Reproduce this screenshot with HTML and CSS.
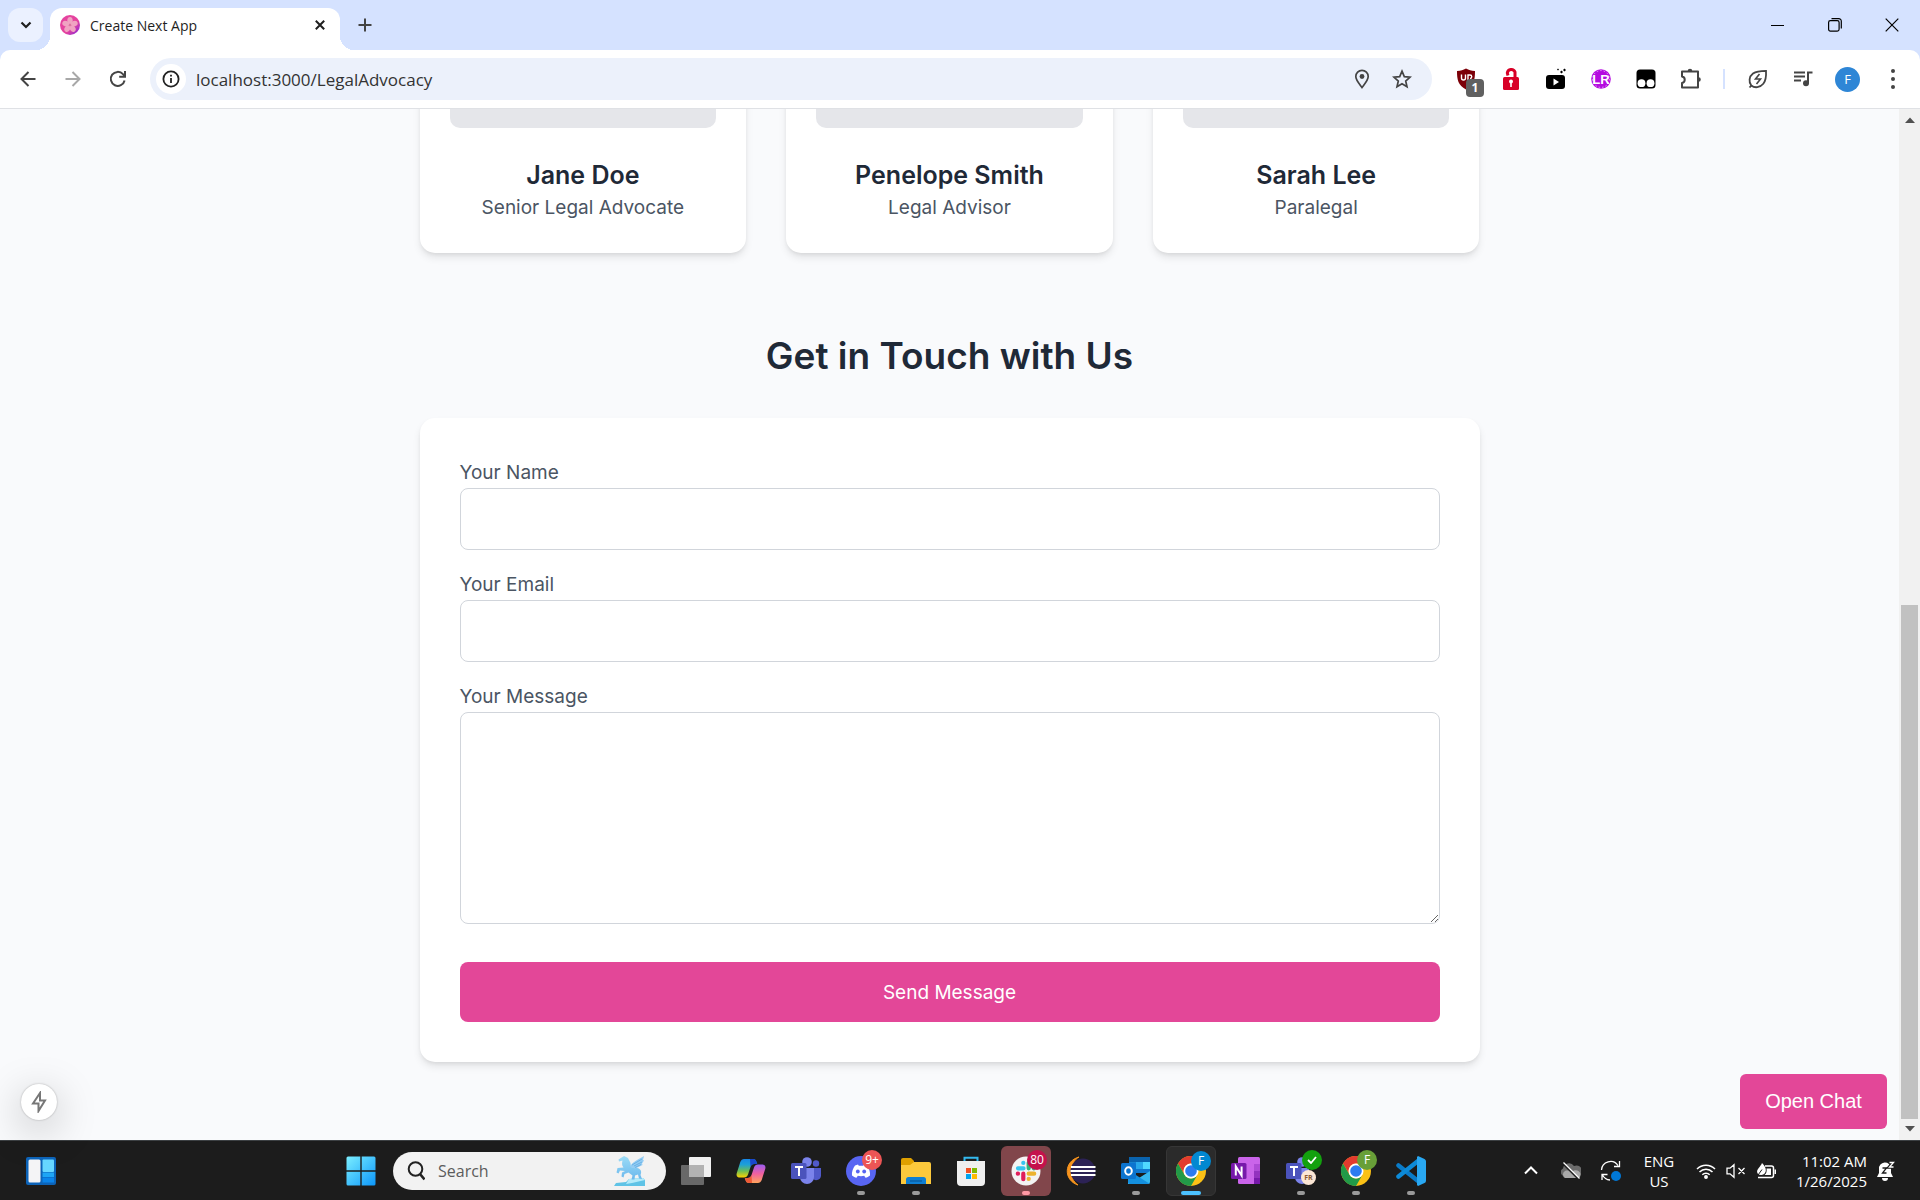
FILE: index.html
```html
<!DOCTYPE html>
<html lang="en">
<head>
    <meta charset="UTF-8">
    <meta name="viewport" content="width=device-width, initial-scale=1.0">
    <title>Create Next App</title>
    <link rel="stylesheet" href="styles.css">
</head>
<body>
    <!-- Tab strip -->
    <header class="tab-strip">
        <button class="tab-search" aria-label="Search tabs">
            <svg width="12" height="8" viewBox="0 0 12 8"><path d="M1.5 1.5 6 6l4.5-4.5" fill="none" stroke="#1f1f1f" stroke-width="2.2"/></svg>
        </button>
        <div class="tab">
            <svg width="20" height="20" viewBox="0 0 20 20">
                <defs>
                    <linearGradient id="favicon" x1="0" y1="0" x2="1" y2="1"><stop offset=".6" stop-color="#e5439f"/><stop offset="1" stop-color="#7a22e0"/></linearGradient>
                </defs>
                <circle cx="10" cy="10" r="10" fill="url(#favicon)"/>
                <g fill="#f0a3c2">
                    <ellipse cx="10" cy="5.5" rx="2.7" ry="3.5"/>
                    <ellipse cx="10" cy="5.5" rx="2.7" ry="3.5" transform="rotate(72 10 10)"/>
                    <ellipse cx="10" cy="5.5" rx="2.7" ry="3.5" transform="rotate(144 10 10)"/>
                    <ellipse cx="10" cy="5.5" rx="2.7" ry="3.5" transform="rotate(216 10 10)"/>
                    <ellipse cx="10" cy="5.5" rx="2.7" ry="3.5" transform="rotate(288 10 10)"/>
                </g>
                <circle cx="10" cy="10" r="1.2" fill="#d9799f"/>
            </svg>
            <span class="tab-title">Create Next App</span>
            <button class="tab-close" aria-label="Close tab">
                <svg width="10" height="10" viewBox="0 0 10 10"><path d="M.8.8l8.4 8.4M9.2.8.8 9.2" stroke="#1f1f1f" stroke-width="2"/></svg>
            </button>
        </div>
        <button class="new-tab" aria-label="New tab">
            <svg width="14" height="14" viewBox="0 0 14 14"><path d="M7 .5v13M.5 7h13" stroke="#444" stroke-width="2"/></svg>
        </button>
        <div class="window-controls">
            <button aria-label="Minimize"><svg width="13" height="13" viewBox="0 0 13 13"><path d="M0 6.5h13" stroke="#000"/></svg></button>
            <button aria-label="Restore"><svg width="14" height="14" viewBox="0 0 14 14" fill="none" stroke="#000" stroke-width="1.2"><rect x=".6" y="2.6" width="10.5" height="10.5" rx="1.8"/><path d="M3.5.7h7.3a2.5 2.5 0 0 1 2.5 2.5v7.3"/></svg></button>
            <button aria-label="Close"><svg width="14" height="14" viewBox="0 0 14 14"><path d="M.7.7l12.6 12.6M13.3.7.7 13.3" stroke="#000" stroke-width="1.2"/></svg></button>
        </div>
    </header>

    <!-- Toolbar -->
    <div class="toolbar-wrap">
        <div class="toolbar">
            <button class="tool" aria-label="Back"><svg width="16" height="16" viewBox="0 0 16 16" fill="none" stroke="#444" stroke-width="2"><path d="M15.5 8H2M8.5 1 1.5 8l7 7"/></svg></button>
            <button class="tool" aria-label="Forward"><svg width="16" height="16" viewBox="0 0 16 16" fill="none" stroke="#a8a8a8" stroke-width="2"><path d="M.5 8H14M7.5 1l7 7-7 7"/></svg></button>
            <button class="tool" aria-label="Reload"><svg width="18" height="18" viewBox="0 0 18 18" fill="none" stroke="#444" stroke-width="2"><path d="M15.6 10.5A7 7 0 1 1 14 4.2L16 6.3"/><path d="M16 1v5.8h-5.8"/></svg></button>
            <div class="address">
                <button class="site-info" aria-label="Site information"><svg width="18" height="18" viewBox="0 0 18 18"><circle cx="9" cy="9" r="7.6" fill="none" stroke="#222" stroke-width="1.8"/><path d="M9 8v5M9 4.7v1.9" stroke="#222" stroke-width="1.8"/></svg></button>
                <input class="url" type="text" aria-label="Address" value="localhost:3000/LegalAdvocacy">
                <button class="address-tool" aria-label="Location"><svg width="16" height="20" viewBox="0 0 16 20"><path d="M8 18.5C5 14.5 1.8 11 1.8 7.5a6.2 6.2 0 0 1 12.4 0C14.2 11 11 14.5 8 18.5z" fill="none" stroke="#444" stroke-width="1.7"/><circle cx="8" cy="7.5" r="2.4" fill="#444"/></svg></button>
                <button class="address-tool" aria-label="Bookmark"><svg width="20" height="20" viewBox="0 0 20 20"><path d="M10 2.2l2.3 5.4 5.8.5-4.4 3.9 1.3 5.7-5-3-5 3 1.3-5.7L1.9 8.1l5.8-.5z" fill="none" stroke="#444" stroke-width="1.7"/></svg></button>
            </div>
            <div class="extensions">
                <button class="tool" aria-label="uBlock">
                    <svg width="18" height="22" viewBox="0 0 18 22">
                        <path d="M0 3c4 0 6-1 9-2.500 3 1.500 5 2.500 9 2.500 0 9-1 14-9 18.500C1 17 0 12 0 3z" fill="#7c0008"/>
                        <path d="M4.500 6.500v3.500a2 2 0 0 0 4 0V6.500M11 13V7h2a1.500 1.500 0 0 1 0 3.500" fill="none" stroke="#fff" stroke-width="1.400"/>
                    </svg>
                    <span class="count">1</span>
                </button>
                <button class="tool" aria-label="Lock"><svg width="16" height="24" viewBox="0 0 16 24"><path d="M5 8.5 4.300 6a4 4 0 0 1 7.700-1v6" fill="none" stroke="#d80027" stroke-width="3"/><rect x="0" y="10" width="16" height="13" rx="1.5" fill="#d80027"/><circle cx="8" cy="14.500" r="2" fill="#fff"/><path d="M7.200 15h1.600v5H7.200z" fill="#fff"/></svg></button>
                <button class="tool" aria-label="Video"><svg width="20" height="22" viewBox="0 0 20 22"><rect x="0" y="7" width="19" height="14" rx="3" fill="#000"/><path d="M7.5 10.5v7l5.5-3.5z" fill="#fff"/><path d="M11 1.500l1 1 1-1-1-1zM17 2l1.500 1.500L20 2 18.500.5zM14 4l1.500 1.500L17 4l-1.500-1.500z" fill="#000"/></svg></button>
                <button class="tool" aria-label="LR">
                    <svg width="20" height="20" viewBox="0 0 20 20"><circle cx="10" cy="10" r="9.8" fill="#b40be0"/><circle cx="10" cy="10" r="8.4" fill="none" stroke="#e7a5f6" stroke-dasharray="1.5 2"/><text x="10" y="15" text-anchor="middle" font-family="Liberation Sans" font-weight="bold" font-size="13" fill="#fff">LR</text></svg>
                </button>
                <button class="tool" aria-label="Tampermonkey"><svg width="20" height="20" viewBox="0 0 20 20"><rect x=".5" y=".5" width="19" height="19" rx="3.5" fill="#000"/><circle cx="5.500" cy="14.200" r="3.900" fill="#fff"/><circle cx="14.500" cy="14.200" r="3.900" fill="#fff"/></svg></button>
                <button class="tool" aria-label="Extensions"><svg width="22" height="22" viewBox="0 0 22 22"><path d="M2 3.5h16v16H2V15a3.300 3.300 0 0 0 0-6.500z" fill="none" stroke="#444" stroke-width="2" stroke-linejoin="round"/><path d="M7.700 3a2.300 2.300 0 0 1 4.600 0zM18.500 9.200a2.300 2.300 0 0 1 0 4.600z" fill="#444"/></svg></button>
            </div>
            <span class="separator"></span>
            <button class="tool" aria-label="Energy saver"><svg width="20" height="20" viewBox="0 0 20 20" fill="none" stroke="#444" stroke-width="1.8"><path d="M3.3 16.5C.5 13 1 7.5 5 4.5 8.5 2 13 1.8 18 1.8c.3 5 .2 9.5-2.7 13-3.3 4-8.6 4.5-12 1.7z"/><path d="M1.5 18.5l2-2.2"/><path d="M11.5 5l-4 5h5l-4 5" stroke-width="1.6"/></svg></button>
            <button class="tool" aria-label="Media controls"><svg width="20" height="18" viewBox="0 0 20 18"><path d="M1 2.5h11M1 6.5h11M1 10.5h7" stroke="#444" stroke-width="2"/><path d="M15 13V2.5h4.5" fill="none" stroke="#444" stroke-width="2"/><circle cx="13" cy="13.3" r="3" fill="#444"/></svg></button>
            <button class="tool" aria-label="Profile"><span class="avatar">F</span></button>
            <button class="tool" aria-label="Menu"><svg width="4" height="20" viewBox="0 0 4 20" fill="#444"><circle cx="2" cy="2" r="2"/><circle cx="2" cy="10" r="2"/><circle cx="2" cy="18" r="2"/></svg></button>
        </div>
    </div>

    <div class="viewport">
        <main class="page">
            <section class="team">
                <div class="card">
                    <div class="photo"></div>
                    <h3>Jane Doe</h3>
                    <p>Senior Legal Advocate</p>
                </div>
                <div class="card">
                    <div class="photo"></div>
                    <h3>Penelope Smith</h3>
                    <p>Legal Advisor</p>
                </div>
                <div class="card">
                    <div class="photo"></div>
                    <h3>Sarah Lee</h3>
                    <p>Paralegal</p>
                </div>
            </section>

            <section class="contact">
                <h2>Get in Touch with Us</h2>
                <form class="contact-form">
                    <label for="name">Your Name</label>
                    <input type="text" id="name">
                    <label for="email">Your Email</label>
                    <input type="email" id="email">
                    <label for="message">Your Message</label>
                    <textarea id="message" rows="6"></textarea>
                    <button type="button">Send Message</button>
                </form>
            </section>
        </main>

        <div class="scrollbar">
            <svg width="10" height="6" viewBox="0 0 10 6"><path d="M0 6l5-5.5L10 6z" fill="#505050"/></svg>
            <div class="track"><div class="thumb"></div></div>
            <svg width="10" height="6" viewBox="0 0 10 6"><path d="M0 0l5 5.5L10 0z" fill="#505050"/></svg>
        </div>

        <button class="dev-button" aria-label="Dev tools"><svg width="16" height="22" viewBox="0 0 16 22"><path d="M9 2 2 12.5h5.5V20L14 9.500H9z" fill="none" stroke="#777" stroke-width="2"/></svg></button>
        <button class="chat-button">Open Chat</button>
    </div>

    <!-- Taskbar -->
    <footer class="taskbar">
        <button class="task" aria-label="Widgets">
            <svg width="30" height="28" viewBox="0 0 30 28">
                <rect width="30" height="28" rx="2" fill="#0c63b8"/>
                <rect x="2.500" y="2.500" width="12" height="23" rx="1.5" fill="#f4f4f6"/>
                <rect x="16.500" y="2.500" width="11.500" height="12.500" rx="1" fill="#66d6ff"/>
                <rect x="16.500" y="15.500" width="11.500" height="4.500" fill="#1ea5f5"/>
                <rect x="16.500" y="20.500" width="11.500" height="5" fill="#0a84ea"/>
            </svg>
        </button>

        <div class="apps">
            <button class="task" aria-label="Start">
                <svg width="30" height="30" viewBox="0 0 30 30">
                    <defs><linearGradient id="win" gradientUnits="userSpaceOnUse" x1="0" y1="0" x2="30" y2="30"><stop offset="0" stop-color="#7df0ff"/><stop offset="1" stop-color="#0a95fa"/></linearGradient></defs>
                    <path d="M.5 2A1.5 1.5 0 0 1 2 .5h12.300v13.800H.5zM15.700.5H28A1.5 1.5 0 0 1 29.500 2v12.300H15.700zM.5 15.700h13.800v13.800H2A1.5 1.5 0 0 1 .5 28zM15.700 15.700h13.800V28a1.5 1.5 0 0 1-1.500 1.500H15.700z" fill="url(#win)"/>
                </svg>
            </button>
            <div class="search">
                <svg width="18" height="20" viewBox="0 0 18 20" fill="none" stroke="#222" stroke-width="2"><circle cx="8.500" cy="8" r="6.800"/><path d="M13 13l4.500 5.500" stroke-width="2.600"/></svg>
                <input type="text" aria-label="Search" placeholder="Search">
                <svg width="32" height="32" viewBox="0 0 32 32">
                    <defs><linearGradient id="horse" x1="0" y1="0" x2="0" y2="1"><stop offset="0" stop-color="#9cdcf7"/><stop offset="1" stop-color="#6bb8ec"/></linearGradient></defs>
                    <path d="M0 31l2-3 10-1 3-3 14-1 2 2v6z" fill="#5fc3e6"/>
                    <path d="M15 24l14-1 2 2-13 3-6 1z" fill="#b4ebfa"/>
                    <path d="M10 1l4 2 2.500 5 .5 4 6 1c4 .5 5 4 3.500 7l1.500 4-3-.5-1-4-3 1-.5 4h-3l1-4-4-3-4 1.500-1 3.500-2-1 .5-4 3-1.500-5-.5-1.500 3-2-1 1-4.500 6-.5c-2-2-1.500-5-1-7l-3.500 1-.5-2z" fill="url(#horse)"/>
                    <path d="M16 12c2-5 7-7 14-11l-1 4 1 .5-2 3 .5 1.500-4 2-3 1.500z" fill="#94cdf4"/>
                    <path d="M18 10l10-6M20 11l8-4M21 12.500l6-3" stroke="#5fa9e0" stroke-width=".8"/>
                </svg>
            </div>
            <button class="task" aria-label="Task view">
                <svg width="30" height="28" viewBox="0 0 30 28"><rect x="8" y="0" width="22" height="20" rx="1" fill="#f0f0f0"/><rect x="0" y="8" width="23" height="20" rx="1" fill="#686868"/><path d="M8 8h15v12H8z" fill="#b2b2b2"/></svg>
            </button>
            <button class="task" aria-label="Copilot">
                <svg width="30" height="28" viewBox="0 0 30 28">
                    <defs>
                        <linearGradient id="cop1" x1="0" y1="0" x2="0" y2="1"><stop offset="0" stop-color="#1687e8"/><stop offset=".3" stop-color="#1da0d8"/><stop offset=".65" stop-color="#6bbd55"/><stop offset="1" stop-color="#ffd200"/></linearGradient>
                        <linearGradient id="cop2" x1="0" y1="1" x2="0" y2="0"><stop offset="0" stop-color="#9a5cf2"/><stop offset=".5" stop-color="#f0609f"/><stop offset="1" stop-color="#ffa45c"/></linearGradient>
                    </defs>
                    <path id="band" d="M8 2h9c2 0 3 1 3.500 3l.7 2h-3c-2 0-3 1-3.700 3l-2.500 7.500c-.6 2-2 3-4 3H4c-3 0-4-2-3.200-4.500L4.300 5C5 3 6.500 2 8 2z" fill="url(#cop1)"/>
                    <path d="M14 2h3c2 0 3 1 3.500 3l.7 2h-3c-2 0-3 1-3.700 3z" fill="#1a47cc"/>
                    <g transform="rotate(180 15 14)">
                        <path d="M8 2h9c2 0 3 1 3.500 3l.7 2h-3c-2 0-3 1-3.700 3l-2.500 7.500c-.6 2-2 3-4 3H4c-3 0-4-2-3.200-4.500L4.300 5C5 3 6.500 2 8 2z" fill="url(#cop2)"/>
                        <path d="M14 2h3c2 0 3 1 3.500 3l.7 2h-3c-2 0-3 1-3.700 3z" fill="#ee5a36"/>
                    </g>
                </svg>
            </button>
            <button class="task" aria-label="Teams">
                <svg width="30" height="28" viewBox="0 0 30 28"><circle cx="25" cy="6.500" r="3.200" fill="#5059c9"/><circle cx="16" cy="5" r="4.800" fill="#7b83eb"/><path d="M21 11h9v8a5 5 0 0 1-9 2z" fill="#5059c9"/><path d="M9 11h14v9a7 7 0 0 1-14 0z" fill="#7b83eb"/><rect x="0" y="6" width="15.500" height="16" rx="1.5" fill="#4b53bc"/><path d="M4 10h8M8 10v9" stroke="#fff" stroke-width="2"/></svg>
            </button>
            <button class="task running" aria-label="Discord">
                <svg width="30" height="30" viewBox="0 0 30 30"><circle cx="15" cy="15" r="15" fill="#5865f2"/><path d="M9 9.500l3-1 .8 1.200h4.400l.8-1.200 3 1c2 3 3.500 6.500 3 10-1.500 1.300-3 2-4.500 2.200l-1.300-2c-2 .6-4.400.6-6.400 0l-1.300 2c-1.500-.2-3-.9-4.500-2.200-.5-3.500 1-7 3-10z" fill="#fff"/><ellipse cx="11.800" cy="15.500" rx="1.900" ry="2.100" fill="#5865f2"/><ellipse cx="18.200" cy="15.500" rx="1.900" ry="2.100" fill="#5865f2"/></svg>
                <span class="badge badge-red">9+</span>
            </button>
            <button class="task running" aria-label="File Explorer">
                <svg width="30" height="28" viewBox="0 0 30 28"><path d="M0 3a2 2 0 0 1 2-2h8l3 3v5H0z" fill="#dfa000"/><path d="M0 8h9l4-3h15a2 2 0 0 1 2 2v20H0z" fill="#fcc93c"/><path d="M5 27v-4.500A2.500 2.500 0 0 1 7.500 20h15a2.500 2.500 0 0 1 2.500 2.500V27z" fill="#0f7fd3"/><path d="M9 24h12" stroke="#085a9e" stroke-width="1.300"/></svg>
            </button>
            <button class="task" aria-label="Store">
                <svg width="30" height="30" viewBox="0 0 30 30"><path d="M8.500 6V1.700h13V6" fill="none" stroke="#33b9ee" stroke-width="2"/><path d="M1 5h28v21a4 4 0 0 1-4 4H5a4 4 0 0 1-4-4z" fill="#efefef"/><path d="M10 12h5v5h-5z" fill="#f25022"/><path d="M16 12h5v5h-5z" fill="#7fba00"/><path d="M10 18h5v5h-5z" fill="#00a4ef"/><path d="M16 18h5v5h-5z" fill="#ffb900"/></svg>
            </button>
            <button class="task running alert" aria-label="Slack">
                <svg width="30" height="30" viewBox="0 0 30 30"><circle cx="15" cy="15" r="14.5" fill="#f3f3f3"/><g stroke-width="4.200" stroke-linecap="round"><path d="M7 12.300h5.500M12.300 6.800v.2" stroke="#36c5f0"/><path d="M17.700 6.800v5.500M22.800 12.300h.2" stroke="#2eb67d"/><path d="M17.700 17.700h5.500M17.700 22.800v.2" stroke="#ecb22e"/><path d="M12.300 17.700v5.500M6.800 17.700h.2" stroke="#e01e5a"/></g></svg>
                <span class="badge badge-crimson">80</span>
            </button>
            <button class="task" aria-label="Eclipse">
                <svg width="30" height="30" viewBox="0 0 30 30"><path d="M13 1C-2 5-3 24 12 29 2 22 3 7 13 1z" fill="#f7941e" stroke="#f7941e"/><circle cx="17" cy="15" r="12.500" fill="#2c2255"/><path d="M5 11h24.500M4.500 15h25M5 19h24.500" stroke="#fff" stroke-width="2.200"/></svg>
            </button>
            <button class="task running" aria-label="Outlook">
                <svg width="30" height="28" viewBox="0 0 30 28"><path d="M8 0h21v15H8z" fill="#0a63ad"/><path d="M8 5h7v10H8z" fill="#1481cf"/><path d="M15 5h7v7h-7z" fill="#28a8ea"/><path d="M22 5h7v7h-7z" fill="#50d9ff"/><path d="M15 12h14v4H15z" fill="#0f78d0"/><path d="M7 27V16l11 5 11-7v11a2 2 0 0 1-2 2z" fill="#35b8f1"/><path d="M7 13l22 14H9a2 2 0 0 1-2-2z" fill="#1490df"/><rect x="0" y="6" width="15" height="16" rx="1.5" fill="#0c74cf"/><ellipse cx="7.500" cy="14" rx="3.300" ry="3.700" fill="none" stroke="#fff" stroke-width="2"/></svg>
            </button>
            <button class="task active" aria-label="Chrome">
                <svg width="30" height="30" viewBox="0 0 30 30"><circle cx="15" cy="15" r="15" fill="#fbc116"/><path d="M2 7.5A15 15 0 0 1 28 7.5H15a7.5 7.5 0 0 0-6.5 11z" fill="#e33b2e"/><path d="M2 7.5l6.5 11.200A7.5 7.5 0 0 0 21.500 18.700L15 30A15 15 0 0 1 2 7.5z" fill="#229a48"/><circle cx="15" cy="15" r="7.5" fill="#fff"/><circle cx="15" cy="15" r="5.800" fill="#2c7bf0"/></svg>
                <span class="badge badge-blue">F</span>
            </button>
            <button class="task" aria-label="OneNote">
                <svg width="30" height="28" viewBox="0 0 30 28"><rect x="7" y="0" width="22" height="27" rx="1.5" fill="#ca64ea"/><path d="M23 7h6v7h-6z" fill="#ae4bd5"/><path d="M23 14h6v7h-6z" fill="#9332bf"/><path d="M23 21h6v6h-6z" fill="#7719aa"/><rect x="0" y="6" width="15.500" height="16" rx="1.5" fill="#7719aa"/><path d="M4.800 18.500v-9l5.800 9v-9" fill="none" stroke="#fff" stroke-width="2"/></svg>
            </button>
            <button class="task running" aria-label="Teams">
                <svg width="30" height="28" viewBox="0 0 30 28"><circle cx="16" cy="5" r="4.800" fill="#7b83eb"/><path d="M9 11h14v9a7 7 0 0 1-14 0z" fill="#7b83eb"/><rect x="0" y="6" width="15.500" height="16" rx="1.5" fill="#4b53bc"/><path d="M4 10h8M8 10v9" stroke="#fff" stroke-width="2"/></svg>
                <span class="badge badge-check"><svg width="10" height="8" viewBox="0 0 10 8"><path d="M1 4l3 3 5-6" fill="none" stroke="#fff" stroke-width="1.800"/></svg></span>
                <span class="badge badge-user">FR</span>
            </button>
            <button class="task running" aria-label="Chrome">
                <svg width="30" height="30" viewBox="0 0 30 30"><circle cx="15" cy="15" r="15" fill="#fbc116"/><path d="M2 7.5A15 15 0 0 1 28 7.5H15a7.5 7.5 0 0 0-6.5 11z" fill="#e33b2e"/><path d="M2 7.5l6.5 11.200A7.5 7.5 0 0 0 21.500 18.700L15 30A15 15 0 0 1 2 7.5z" fill="#229a48"/><circle cx="15" cy="15" r="7.5" fill="#fff"/><circle cx="15" cy="15" r="5.800" fill="#2c7bf0"/></svg>
                <span class="badge badge-green">F</span>
            </button>
            <button class="task running" aria-label="Visual Studio Code">
                <svg width="30" height="30" viewBox="0 0 30 30"><path d="M2.500 9.500L22 25" stroke="#0a7bc8" stroke-width="4.500" stroke-linecap="round"/><path d="M2.500 20.500L22 5" stroke="#0c8ad8" stroke-width="4.500" stroke-linecap="round"/><path d="M22 0l6.500 3A2.500 2.500 0 0 1 30 5.300v19.400a2.500 2.500 0 0 1-1.500 2.300L22 30l-1-1V1z" fill="#29a8f2"/></svg>
            </button>
        </div>

        <div class="tray">
            <button aria-label="Show hidden icons"><svg width="14" height="9" viewBox="0 0 14 9"><path d="M1 7.5l6-6 6 6" fill="none" stroke="#fff" stroke-width="2"/></svg></button>
            <button aria-label="OneDrive"><svg width="20" height="18" viewBox="0 0 20 18"><path d="M3 14a4 4 0 0 1-1-7.5A6 6 0 0 1 13 4a5 5 0 0 1 5 10z" fill="#6c6c6c"/><path d="M4 16a4 4 0 0 1 0-7c3-1 5 0 7 1 2-3 8-2 8.500 2 .3 2.500-1 4-2.500 4z" fill="#a9a9a9"/><path d="M2 1.500l16 16" stroke="#1c1c1c" stroke-width="2"/><path d="M2.500.5l16 16" stroke="#fff" stroke-width="1.300"/></svg></button>
            <button aria-label="Updates"><svg width="22" height="22" viewBox="0 0 22 22"><path d="M1.500 10A9 9 0 0 1 18 5.500M19.500 1v5.500H14M2 20v-5.500h5.500M2.500 15a9 9 0 0 0 7.500 5" fill="none" stroke="#fff" stroke-width="1.300"/><circle cx="16" cy="16" r="5" fill="#0078d7"/></svg></button>
            <button class="lang">ENG<br>US</button>
            <button class="status" aria-label="Network, volume, battery">
                <svg width="20" height="16" viewBox="0 0 20 16" fill="none" stroke="#fff" stroke-width="1.500"><path d="M1 6a12.500 12.500 0 0 1 18 0M3.500 9a9 9 0 0 1 13 0M6.300 11.800a5.300 5.300 0 0 1 7.400 0"/><circle cx="10" cy="14" r="1.200" fill="#fff"/></svg>
                <svg width="20" height="16" viewBox="0 0 20 16" fill="none" stroke="#fff" stroke-width="1.300"><path d="M1 5.200h3L8 1.700v12.600l-4-3.500H1zM12.500 5l6 6M18.500 5l-6 6"/></svg>
                <svg width="20" height="18" viewBox="0 0 20 18"><path d="M9 4h6.500a2 2 0 0 1 2 2v7.500a2 2 0 0 1-2 2H2" fill="none" stroke="#fff" stroke-width="1.500"/><path d="M10.500 6.500H15V13H8.500c2-1.500 2.500-4 2-6.500z" fill="#fff"/><path d="M18.500 7.500H20V12h-1.500z" fill="#fff"/><path d="M6 1c3 3 4.500 6 3.500 9s-5 4-7.500 2C-1 8 4 6 6 1z" fill="#fff"/><path d="M1 14.500l5-7" stroke="#1c1c1c"/></svg>
            </button>
            <button class="clock">11:02 AM<br>1/26/2025</button>
            <button aria-label="Notifications"><svg width="18" height="20" viewBox="0 0 18 20"><path d="M2 8a6 6 0 0 1 12-1v5l2 4H0l2-4zM5 17h6a3 3 0 0 1-6 0z" fill="#fff"/><path d="M5.500 7h4l-4 5h4" fill="none" stroke="#1c1c1c" stroke-width="1.300"/><path d="M12.500 1.500h4l-4 4.500h4" fill="none" stroke="#1c1c1c" stroke-width="3.500"/><path d="M12.500 1.500h4l-4 4.500h4" fill="none" stroke="#fff" stroke-width="1.300"/></svg></button>
        </div>
    </footer>
</body>
</html>
```

FILE: styles.css
```css
* {
    box-sizing: border-box;
}
body {
    margin: 0;
    height: 100vh;
    display: flex;
    flex-direction: column;
    overflow: hidden;
    font-family: "Open Sans", sans-serif;
    background-color: #fff;
}
button {
    display: flex;
    align-items: center;
    justify-content: center;
    padding: 0;
    border: none;
    background: none;
    font-family: inherit;
    cursor: pointer;
}
svg {
    flex: none;
}

/* Tab strip */
.tab-strip {
    display: flex;
    height: 50px;
    padding: 8px 0 0 8px;
    background-color: #d5e2ff;
}
.tab-search {
    width: 35px;
    height: 34px;
    margin-right: 7px;
    border-radius: 12px;
    background-color: #ebf1ff;
}
.tab {
    position: relative;
    display: flex;
    align-items: center;
    width: 290px;
    padding: 0 10px 8px;
    border-radius: 12px 12px 0 0;
    background-color: #fff;
}
.tab::before,
.tab::after {
    content: "";
    position: absolute;
    bottom: 0;
    width: 14px;
    height: 14px;
}
.tab::before {
    left: -14px;
    background: radial-gradient(circle at 0 0, transparent 14px, #fff 14px);
}
.tab::after {
    right: -14px;
    background: radial-gradient(circle at 100% 0, transparent 14px, #fff 14px);
}
.tab-title {
    flex: 1;
    margin-left: 10px;
    font-size: 14px;
    color: #1f1f1f;
}
.tab-close {
    width: 20px;
    height: 20px;
}
.new-tab {
    width: 30px;
    height: 34px;
    margin-left: 10px;
}
.window-controls {
    display: flex;
    margin-left: auto;
}
.window-controls button {
    width: 57px;
    height: 34px;
}

/* Toolbar */
.toolbar-wrap {
    background-color: #d5e2ff;
}
.toolbar {
    display: flex;
    align-items: center;
    height: 59px;
    padding: 0 5px;
    border-bottom: 1px solid #dfe1e5;
    border-radius: 10px 10px 0 0;
    background-color: #fff;
}
.tool {
    position: relative;
    width: 45px;
    height: 42px;
}
.address {
    flex: 1;
    display: flex;
    align-items: center;
    height: 42px;
    margin: 0 11px 0 10px;
    padding: 0 10px 0 6px;
    border-radius: 21px;
    background-color: #ecf1fb;
}
.site-info {
    width: 30px;
    height: 30px;
    border-radius: 50%;
    background-color: #fff;
}
.url {
    flex: 1;
    min-width: 0;
    padding: 0 10px;
    border: none;
    background: none;
    font-family: inherit;
    font-size: 17px;
    color: #333;
    outline: none;
}
.address-tool {
    width: 40px;
    height: 40px;
}
.extensions {
    display: flex;
}
.count {
    position: absolute;
    right: 4px;
    bottom: 3px;
    width: 18px;
    border-radius: 4px;
    background-color: #606060;
    color: #fff;
    font-size: 12px;
    font-weight: bold;
    line-height: 18px;
}
.separator {
    width: 2px;
    height: 20px;
    margin: 0 10px;
    background-color: #d5e2ff;
}
.avatar {
    width: 25px;
    height: 25px;
    border-radius: 50%;
    background-color: #2e86d6;
    color: #fff;
    font-size: 13px;
    line-height: 25px;
}

/* Page */
.viewport {
    position: relative;
    flex: 1;
    display: flex;
    min-height: 0;
    background-color: #f9fafc;
}
.page {
    flex: 1;
    display: flex;
    flex-direction: column;
    justify-content: flex-end;
    align-items: center;
    overflow: hidden;
    padding: 0 40px 78px;
    font-family: "Inter", sans-serif;
}
.team,
.contact {
    width: 100%;
    max-width: 1060px;
}
.team {
    display: grid;
    grid-template-columns: repeat(3, 1fr);
    gap: 40px;
}
.card,
.contact-form {
    background-color: #fff;
    border-radius: 15px;
    box-shadow: 0 5px 8px -1px rgba(0, 0, 0, 0.1), 0 2px 5px -2px rgba(0, 0, 0, 0.1);
}
.card {
    padding: 30px;
    text-align: center;
}
.photo {
    height: 240px;
    margin-bottom: 30px;
    border-radius: 10px;
    background-color: #e5e6ea;
}
.card h3 {
    margin: 0;
    font-size: 25px;
    font-weight: 600;
    line-height: 35px;
    color: #1f2937;
}
.card p {
    margin: 0;
    font-size: 19px;
    line-height: 30px;
    color: #4b5563;
}
.contact h2 {
    margin: 80px 0 40px;
    font-size: 37px;
    font-weight: 600;
    line-height: 45px;
    text-align: center;
    color: #1f2937;
}
.contact-form {
    padding: 40px;
}
.contact-form label {
    display: block;
    font-size: 19px;
    line-height: 30px;
    color: #4b5563;
}
.contact-form input,
.contact-form textarea {
    display: block;
    width: 100%;
    margin-bottom: 20px;
    padding: 15px;
    border: 1px solid #d1d5db;
    border-radius: 8px;
    background-color: #fff;
    font-family: inherit;
    font-size: 19px;
    line-height: 30px;
}
.contact-form textarea {
    margin-bottom: 38px;
    resize: vertical;
}
.contact-form button {
    width: 100%;
    height: 60px;
    border-radius: 8px;
    background-color: #e34798;
    color: #fff;
    font-size: 19px;
}
.scrollbar {
    display: flex;
    flex-direction: column;
    align-items: center;
    width: 21px;
    padding: 8px 0;
    background-color: #f1f1f1;
}
.track {
    flex: 1;
    display: flex;
    align-items: flex-end;
    margin: 8px 0 7px;
}
.thumb {
    width: 17px;
    height: 52%;
    background-color: #c1c1c1;
}
.dev-button {
    position: absolute;
    left: 21px;
    bottom: 20px;
    width: 36px;
    height: 36px;
    border-radius: 50%;
    background-color: #fff;
    box-shadow: 0 0 2px rgba(0, 0, 0, 0.3), 0 10px 40px rgba(0, 0, 0, 0.25);
}
.chat-button {
    position: absolute;
    right: 33px;
    bottom: 11px;
    width: 147px;
    height: 55px;
    border-radius: 6px;
    background-color: #e34798;
    color: #fff;
    font-family: "Liberation Sans", sans-serif;
    font-size: 20px;
}

/* Taskbar */
.taskbar {
    display: flex;
    align-items: center;
    height: 60px;
    padding: 0 15px 0 16px;
    border-top: 1px solid #3c4043;
    background-color: #1c1c1c;
}
.apps {
    display: flex;
    align-items: center;
    gap: 5px;
    margin-left: 270px;
}
.task {
    position: relative;
    width: 50px;
    height: 50px;
    border-radius: 6px;
}
.search {
    display: flex;
    align-items: center;
    width: 273px;
    height: 38px;
    padding: 0 20px 0 14px;
    margin-left: 2px;
    border-radius: 19px;
    background-color: #f2f2f2;
}
.search input {
    flex: 1;
    min-width: 0;
    padding: 0 13px;
    border: none;
    background: none;
    font-family: inherit;
    font-size: 16px;
    outline: none;
}
.search input::placeholder {
    color: #5c5c5c;
}
.running::after,
.active::after {
    content: "";
    position: absolute;
    bottom: 1px;
    width: 8px;
    height: 4px;
    border-radius: 2px;
    background-color: #9a9a9a;
}
.alert {
    background-color: #81464b;
}
.alert::after {
    background-color: #ff99a4;
}
.active {
    border: 1px solid #363636;
    background-color: #2b2b2b;
}
.active::after {
    bottom: 0;
    width: 20px;
    background-color: #4cc2ff;
}
.badge {
    position: absolute;
    top: 4px;
    right: 4px;
    display: flex;
    align-items: center;
    justify-content: center;
    width: 20px;
    height: 20px;
    border-radius: 50%;
    color: #fff;
    font-size: 12px;
}
.badge-red {
    background-color: #ec5555;
}
.badge-crimson {
    background-color: #c4124c;
}
.badge-blue {
    background-color: #0288d1;
}
.badge-green {
    background-color: #689f38;
}
.badge-check {
    background-color: #13a10e;
}
.badge-user {
    top: 24px;
    right: 10px;
    width: 15px;
    height: 15px;
    background-color: #fbe6d5;
    color: #8a5a34;
    font-size: 7px;
    font-weight: bold;
}
.tray {
    display: flex;
    align-items: center;
    margin-left: auto;
    color: #fff;
}
.tray button {
    width: 40px;
    height: 50px;
    color: #fff;
    font-size: 15px;
    line-height: 20px;
}
.tray .lang {
    display: block;
    width: 56px;
}
.tray .status {
    gap: 10px;
    width: 98px;
}
.tray .clock {
    display: block;
    width: 82px;
    text-align: right;
}
.tray .clock + button {
    width: 38px;
}
```
